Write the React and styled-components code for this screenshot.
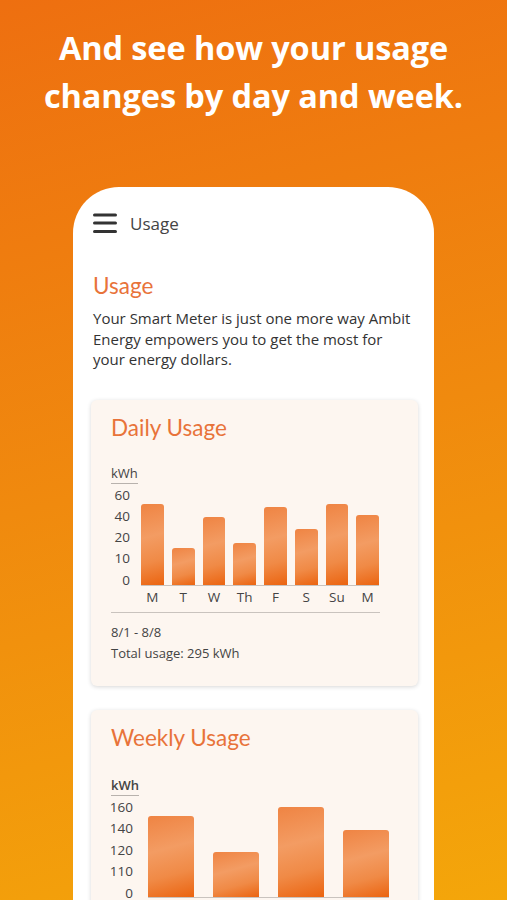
import React from "react";
import styled, { createGlobalStyle } from "styled-components";

const Global = createGlobalStyle`
  html, body { margin: 0; padding: 0; }
  body { font-family: "Open Sans", "Liberation Sans", sans-serif; }
`;

const Screen = styled.div`
  width: 507px;
  height: 900px;
  overflow: hidden;
  background: linear-gradient(165deg, #ee6f10 0%, #f08a0e 50%, #f4a60a 100%);
  display: flex;
  flex-direction: column;
  align-items: center;
`;

const Headline = styled.h1`
  margin: 24px 0 0;
  color: #fff;
  font-family: "Open Sans", sans-serif;
  font-weight: 700;
  font-size: 32.5px;
  line-height: 48px;
  text-align: center;
  letter-spacing: -0.1px;
`;

const Phone = styled.div`
  margin-top: 67px;
  align-self: flex-start;
  margin-left: 73px;
  width: 361px;
  flex: 1;
  background: #fff;
  border-radius: 46px 46px 0 0;
  padding: 24px 16px 0 18px;
  box-sizing: border-box;
`;

const TopBar = styled.div`
  display: flex;
  align-items: center;
  gap: 13px;
  height: 24px;
  padding-left: 2px;
`;

const TopTitle = styled.span`
  font-size: 17px;
  color: #444;
`;

const PageTitle = styled.h2`
  margin: 37px 0 0;
  padding-left: 2px;
  font-family: "Lato", sans-serif;
  font-weight: 400;
  font-size: 22.5px;
  line-height: 28px;
  color: #e8733a;
`;

const Intro = styled.p`
  margin: 8px 0 0;
  padding-left: 2px;
  font-size: 15px;
  line-height: 20.5px;
  color: #333;
`;

const Card = styled.section`
  margin-top: ${(p) => p.$mt}px;
  background: #fdf6f0;
  border-radius: 6px;
  box-shadow: 0 1px 4px rgba(0, 0, 0, 0.16);
  padding: 14px 20px 22px;
`;

const CardTitle = styled.h3`
  margin: 0;
  font-family: "Lato", sans-serif;
  font-weight: 400;
  font-size: 22.5px;
  line-height: 28px;
  color: #e8733a;
`;

const Unit = styled.div`
  margin-top: ${(p) => p.$mt}px;
  display: inline-block;
  font-size: 13px;
  line-height: 16px;
  font-weight: ${(p) => (p.$bold ? 600 : 400)};
  color: #444;
  padding-bottom: 2px;
  border-bottom: 1px solid #b8b2ad;
`;

const ChartRow = styled.div`
  margin-top: ${(p) => p.$mt}px;
  display: flex;
  align-items: flex-end;
  gap: ${(p) => p.$gap}px;
`;

const YAxis = styled.div`
  width: ${(p) => p.$w}px;
  height: ${(p) => p.$h}px;
  display: flex;
  flex-direction: column;
  justify-content: space-between;
  align-items: flex-end;
  font-size: 13.5px;
  line-height: 16px;
  color: #444;
  margin-bottom: ${(p) => p.$mb}px;
`;

const Bars = styled.div`
  flex: 0 0 ${(p) => p.$w}px;
  display: grid;
  grid-template-columns: repeat(${(p) => p.$n}, 1fr);
  column-gap: ${(p) => p.$gap}px;
  align-items: end;
  border-bottom: 1px solid #c9c3be;
`;

const Bar = styled.div`
  border-radius: 3px 3px 0 0;
  background: linear-gradient(165deg, #ef8443 0%, #f39c63 40%, #f08a46 70%, #eb6410 100%);
`;

const Days = styled.div`
  margin-left: ${(p) => p.$ml}px;
  width: ${(p) => p.$w}px;
  display: grid;
  grid-template-columns: repeat(8, 1fr);
  column-gap: 8px;
  margin-top: 3px;
  font-size: 13.5px;
  line-height: 16px;
  color: #444;
  text-align: center;
`;

const Divider = styled.div`
  margin-top: 7px;
  width: 269px;
  height: 1px;
  background: #c9c3be;
`;

const Meta = styled.div`
  margin-top: ${(p) => p.$mt}px;
  font-size: 13px;
  line-height: 21px;
  color: #444;
`;

const Menu = () => (
  <svg width="24" height="22" viewBox="0 0 24 22">
    <g stroke="#333" strokeWidth="3" strokeLinecap="round">
      <line x1="1.5" y1="3" x2="22.5" y2="3" />
      <line x1="1.5" y1="11" x2="22.5" y2="11" />
      <line x1="1.5" y1="19.5" x2="22.5" y2="19.5" />
    </g>
  </svg>
);

const daily = [
  ["M", 81],
  ["T", 37],
  ["W", 68],
  ["Th", 42],
  ["F", 78],
  ["S", 56],
  ["Su", 81],
  ["M", 70],
];

const weekly = [81, 45, 90, 67];

export default function App() {
  return (
    <>
      <Global />
      <Screen>
        <Headline>
          And see how your usage
          <br />
          changes by day and week.
        </Headline>
        <Phone>
          <TopBar>
            <Menu />
            <TopTitle>Usage</TopTitle>
          </TopBar>
          <PageTitle>Usage</PageTitle>
          <Intro>
            Your Smart Meter is just one more way Ambit Energy empowers you to
            get the most for your energy dollars.
          </Intro>

          <Card $mt={30}>
            <CardTitle>Daily Usage</CardTitle>
            <Unit $mt={23}>kWh</Unit>
            <ChartRow $mt={3} $gap={11}>
              <YAxis $w={19} $h={101} $mb={-2}>
                <span>60</span>
                <span>40</span>
                <span>20</span>
                <span>10</span>
                <span>0</span>
              </YAxis>
              <Bars $w={238} $n={8} $gap={8}>
                {daily.map(([d, h], i) => (
                  <Bar key={i} style={{ height: h }} />
                ))}
              </Bars>
            </ChartRow>
            <Days $ml={30} $w={238}>
              {daily.map(([d], i) => (
                <span key={i}>{d}</span>
              ))}
            </Days>
            <Divider />
            <Meta $mt={9}>
              8/1 - 8/8
              <br />
              Total usage: 295 kWh
            </Meta>
          </Card>

          <Card $mt={24}>
            <CardTitle>Weekly Usage</CardTitle>
            <Unit $mt={25} $bold>
              kWh
            </Unit>
            <ChartRow $mt={3} $gap={15}>
              <YAxis $w={22} $h={102} $mb={-3}>
                <span>160</span>
                <span>140</span>
                <span>120</span>
                <span>110</span>
                <span>0</span>
              </YAxis>
              <Bars $w={241} $n={4} $gap={19}>
                {weekly.map((h, i) => (
                  <Bar key={i} style={{ height: h }} />
                ))}
              </Bars>
            </ChartRow>
          </Card>
        </Phone>
      </Screen>
    </>
  );
}
